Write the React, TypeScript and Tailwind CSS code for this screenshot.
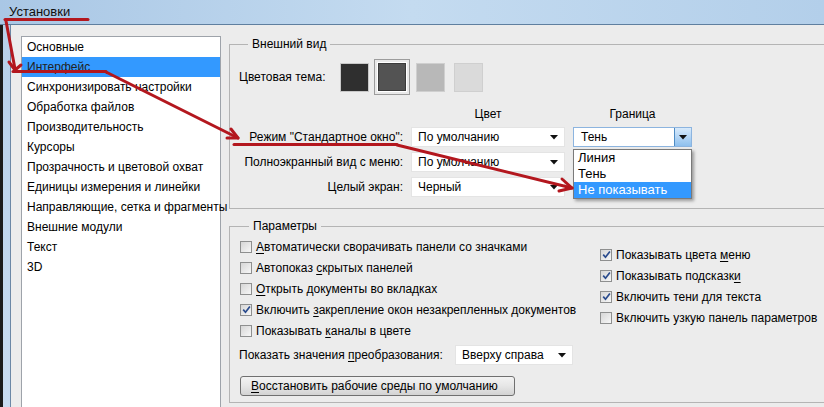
import React from "react";

function Check({ checked }: { checked?: boolean }) {
  return (
    <span className="w-[12px] h-[12px] border border-[#8e8f8f] bg-gradient-to-br from-[#d6d6d6] to-[#f7f7f7] flex items-center justify-center shrink-0">
      {checked && (
        <svg width="9" height="9" viewBox="0 0 9 9">
          <path d="M1.2 4.6 L3.5 7.2 L7.9 1.4" stroke="#2a4b8d" strokeWidth="1.7" fill="none" />
        </svg>
      )}
    </span>
  );
}

function Arrow() {
  return (
    <svg width="8" height="5" viewBox="0 0 8 5" className="shrink-0">
      <path d="M0 0 H8 L4 4.5 Z" fill="#111" />
    </svg>
  );
}

function Drop({ text, w }: { text: string; w: string }) {
  return (
    <div className={`${w} h-[20px] shrink-0 bg-white border border-[#e4e4e4] flex items-center justify-between pl-[6px] pr-[6px]`}>
      <span>{text}</span>
      <Arrow />
    </div>
  );
}

function CRow({ checked, children }: { checked?: boolean; children: React.ReactNode }) {
  return (
    <div className="h-[21px] flex items-center gap-[4px]">
      <Check checked={checked} />
      <span>{children}</span>
    </div>
  );
}

const U = ({ c }: { c: string }) => <span className="underline underline-offset-2">{c}</span>;

export default function App() {
  const items = [
    "Основные",
    "Интерфейс",
    "Синхронизировать настройки",
    "Обработка файлов",
    "Производительность",
    "Курсоры",
    "Прозрачность и цветовой охват",
    "Единицы измерения и линейки",
    "Направляющие, сетка и фрагменты",
    "Внешние модули",
    "Текст",
    "3D",
  ];
  return (
    <div className="w-[824px] h-[407px] overflow-hidden relative bg-[#ececec] font-['Liberation_Sans',Arial,sans-serif] text-[12px] text-black whitespace-nowrap">
      <div className="h-[25px] border-b border-[#5f7f9f] bg-gradient-to-r from-[#a9c7e5] via-[#c4dbf0] to-[#b3cfea] flex items-center pl-[9px] text-[13px] text-[#111]">
        Установки
      </div>
      <div className="flex h-[382px]">
        <div className="w-[3px] shrink-0 bg-[#1b1b1b]" />
        <div className="w-[7px] shrink-0 bg-gradient-to-b from-[#b7d0ea] to-[#c9dcf0]" />
        <div className="w-[1px] shrink-0 bg-[#6c88a6]" />
        <div className="flex-1 min-w-0 overflow-hidden flex pl-[10px] pt-[11px] gap-[8px]">
          <div className="w-[200px] h-[400px] shrink-0 bg-white border border-[#9ea3aa]">
            {items.map((t, i) => (
              <div
                key={t}
                className={`h-[20px] leading-[20px] pl-[5px] ${i === 1 ? "bg-[#3399ff] text-[#222]" : ""}`}
              >
                {t}
              </div>
            ))}
          </div>
          <div className="w-[620px] shrink-0 flex flex-col">
            <fieldset className="border border-[#b4b4b4] pl-[9px] pb-[11px]">
              <legend className="ml-[9px] px-[4px] leading-[16px]">Внешний вид</legend>
              <div className="flex items-center h-[36px] mt-[7px]">
                <div className="w-[96px]">Цветовая тема:</div>
                <div className="w-[38px] flex justify-center">
                  <div className="w-[29px] h-[29px] border border-[#c8c8c8] bg-[#2f2f2f]" />
                </div>
                <div className="w-[38px] flex justify-center">
                  <div className="w-[36px] h-[36px] border border-[#9c9c9c] bg-[#e9e9e9] p-[2px]">
                    <div className="w-full h-full border-2 border-white bg-[#535353] outline outline-1 outline-[#3a3a3a] -outline-offset-2" />
                  </div>
                </div>
                <div className="w-[38px] flex justify-center">
                  <div className="w-[29px] h-[29px] border border-[#cfcfcf] bg-[#b8b8b8]" />
                </div>
                <div className="w-[38px] flex justify-center">
                  <div className="w-[29px] h-[29px] border border-[#cfcfcf] bg-[#dadada]" />
                </div>
              </div>
              <div className="flex h-[16px] items-center mt-[11px]">
                <div className="w-[172px]" />
                <div className="w-[154px] text-center">Цвет</div>
                <div className="w-[8px]" />
                <div className="w-[119px] text-center">Граница</div>
              </div>
              <div className="flex flex-col gap-[5px] mt-[5px]">
                <div className="flex items-center gap-[8px] h-[20px]">
                  <div className="w-[164px] text-right">Режим "Стандартное окно":</div>
                  <Drop text="По умолчанию" w="w-[154px]" />
                  <div className="relative w-[119px] h-[20px]">
                    <div className="w-full h-full bg-white border border-[#8cb4df] flex items-center justify-between pl-[7px]">
                      <span>Тень</span>
                      <div className="w-[17px] h-full border-l border-[#4f8cc4] bg-gradient-to-b from-[#d8eafb] to-[#8ec0ee] flex items-center justify-center">
                        <Arrow />
                      </div>
                    </div>
                    <div className="absolute left-0 top-[22px] w-[119px] bg-white border border-[#7a7a7a] shadow-[2px_2px_3px_rgba(0,0,0,0.35)] text-[13px] z-10">
                      <div className="h-[16px] leading-[16px] pl-[4px]">Линия</div>
                      <div className="h-[16px] leading-[16px] pl-[4px]">Тень</div>
                      <div className="h-[16px] leading-[16px] pl-[4px] bg-[#3399ff] text-white">Не показывать</div>
                    </div>
                  </div>
                </div>
                <div className="flex items-center gap-[8px] h-[20px]">
                  <div className="w-[164px] text-right">Полноэкранный вид с меню:</div>
                  <Drop text="По умолчанию" w="w-[154px]" />
                </div>
                <div className="flex items-center gap-[8px] h-[20px]">
                  <div className="w-[164px] text-right">Целый экран:</div>
                  <Drop text="Черный" w="w-[154px]" />
                </div>
              </div>
            </fieldset>
            <fieldset className="border border-[#b4b4b4] mt-[9px] pl-[10px] pb-[6px]">
              <legend className="ml-[9px] px-[4px] leading-[16px]">Параметры</legend>
              <div className="flex">
                <div className="w-[360px] shrink-0 flex flex-col pt-[2px]">
                  <CRow>
                    <U c="А" />втоматически сворачивать панели со значками
                  </CRow>
                  <CRow>
                    Автопоказ <U c="с" />крытых панелей
                  </CRow>
                  <CRow>
                    <U c="О" />ткрыть документы во вкладках
                  </CRow>
                  <CRow checked>
                    Включить <U c="з" />акрепление окон незакрепленных документов
                  </CRow>
                  <CRow>
                    Показывать <U c="к" />аналы в цвете
                  </CRow>
                  <div className="flex items-center h-[20px] mt-[4px] -ml-[1px]">
                    <div className="w-[216px] shrink-0">
                      Показать значения <U c="п" />реобразования:
                    </div>
                    <Drop text="Вверху справа" w="w-[118px]" />
                  </div>
                  <div className="mt-[11px] w-[275px] h-[20px] rounded-[3px] border border-[#707070] bg-gradient-to-b from-[#f3f3f3] via-[#e6e6e6] to-[#d3d3d3] flex items-center pl-[10px]">
                    <span>
                      <U c="В" />осстановить рабочие среды по умолчанию
                    </span>
                  </div>
                </div>
                <div className="flex flex-col pt-[10px]">
                  <CRow checked>
                    Показывать цвета <U c="м" />еню
                  </CRow>
                  <CRow checked>
                    Показывать подсказк<U c="и" />
                  </CRow>
                  <CRow checked>Включить тени для текста</CRow>
                  <CRow>Включить узкую панель параметров</CRow>
                </div>
              </div>
            </fieldset>
          </div>
        </div>
      </div>
      <svg className="absolute inset-0 pointer-events-none z-20" width="824" height="407" viewBox="0 0 824 407">
        <g stroke="#b3171e" strokeWidth="3" fill="none" strokeLinecap="round" strokeLinejoin="round">
          <path d="M5 19.5 H88" />
          <path d="M6 21 L15 69" />
          <path d="M9 62 L15 70 L21 65" />
          <path d="M13 71.5 H106" />
          <path d="M106 72 L238 138" />
          <path d="M227 138 L238 138 L231 129" />
          <path d="M234 144.5 H397" />
          <path d="M397 145 L572 188" />
          <path d="M559 191 L572 188 L562 179" />
        </g>
      </svg>
    </div>
  );
}
